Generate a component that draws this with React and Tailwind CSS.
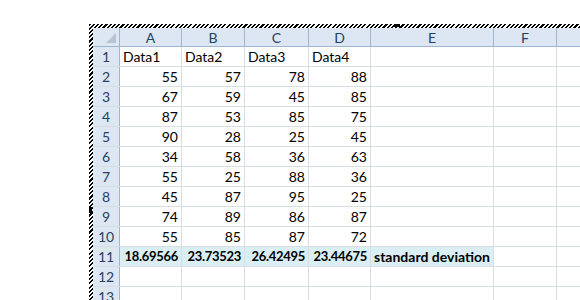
import React from 'react';

const cols = [
  { key: 'A', w: 'w-[62px]' },
  { key: 'B', w: 'w-[63px]' },
  { key: 'C', w: 'w-[64px]' },
  { key: 'D', w: 'w-[62px]' },
  { key: 'E', w: 'w-[123px]' },
  { key: 'F', w: 'w-[63px]' },
  { key: 'G', w: 'w-[90px]' },
];

const rows = [
  ['Data1', 'Data2', 'Data3', 'Data4'],
  [55, 57, 78, 88],
  [67, 59, 45, 85],
  [87, 53, 85, 75],
  [90, 28, 25, 45],
  [34, 58, 36, 63],
  [55, 25, 88, 36],
  [45, 87, 95, 25],
  [74, 89, 86, 87],
  [55, 85, 87, 72],
  ['18.69566', '23.73523', '26.42495', '23.44675', 'standard deviation'],
  [],
  [],
];

const hatch =
  'bg-[repeating-linear-gradient(135deg,#000_0px,#000_1.5px,#fff_1.5px,#fff_3px)]';

function Cell({ row, i, v }) {
  const total = row === 10;
  const right = typeof v === 'number' || (total && i < 4);
  let extra = '';
  if (total && i < 4) extra = 'bg-[#daeef3] font-bold text-[13px] tracking-[-0.3px]';
  if (total && i === 4) extra = 'bg-[#daeef3] font-bold text-[14px]';
  return (
    <div
      className={`${cols[i].w} shrink-0 h-full border-r border-[#d8dce3] px-[3px] flex items-center whitespace-nowrap ${
        right ? 'justify-end' : 'justify-start'
      } ${extra}`}
    >
      {v}
    </div>
  );
}

export default function App() {
  return (
    <div
      className="w-[580px] h-[300px] bg-white overflow-hidden pl-[89px] pt-[24px] text-[14px] text-black"
      style={{ fontFamily: 'Lato, "Open Sans", sans-serif' }}
    >
      <div className={`relative ${hatch} pl-[4px] pt-[4px] h-[300px]`}>
        <div className="absolute left-[305px] top-0 w-[6px] h-[3px] bg-black" />
        <div className="absolute left-0 top-[183px] w-[3px] h-[6px] bg-black" />
        <div className="bg-white h-full">
          {/* column headers */}
          <div className="flex h-[19px] bg-[#dde7f3] border-b border-[#9eb6ce] text-[#27415f]">
            <div className="w-[27px] shrink-0 border-r border-[#9eb6ce] relative">
              <div className="absolute right-[3px] bottom-[3px] w-0 h-0 border-l-[10px] border-l-transparent border-b-[10px] border-b-[#b6c3d2]" />
            </div>
            {cols.map((c) => (
              <div
                key={c.key}
                className={`${c.w} shrink-0 border-r border-[#9eb6ce] flex items-center justify-center`}
              >
                {c.key}
              </div>
            ))}
          </div>
          {rows.map((r, ri) => (
            <div key={ri} className="flex h-[20px] border-b border-[#d8dce3]">
              <div className="w-[27px] shrink-0 bg-[#dde7f3] border-r border-[#9eb6ce] flex items-center justify-center text-[#27415f]">
                {ri + 1}
              </div>
              {cols.map((c, i) => (
                <Cell key={c.key} row={ri} i={i} v={r[i] ?? ''} />
              ))}
            </div>
          ))}
        </div>
      </div>
    </div>
  );
}
